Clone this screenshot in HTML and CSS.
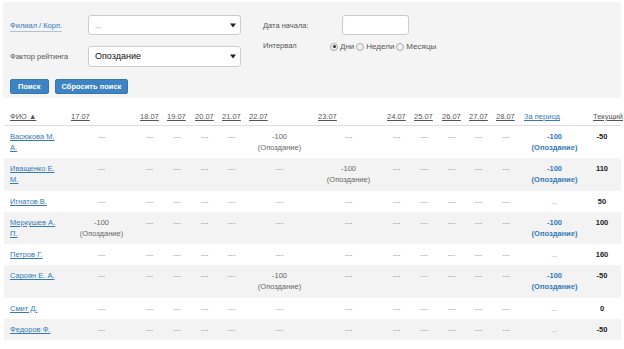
FILE: index.html
```html
<!DOCTYPE html>
<html lang="ru">
<head>
<meta charset="utf-8">
<title>Рейтинг</title>
<link rel="stylesheet" href="styles.css">
</head>
<body>
<div class="page">
  <div class="filters">
    <div class="filter-cols">
      <div class="col-left">
        <div class="frow">
          <span class="flabel"><a class="flink">Филиал / Корп.</a></span>
          <div class="select"><span class="ph">...</span><svg class="caret" width="6" height="5" viewBox="0 0 6 5"><path d="M0 0.5 H6 L3 4.5 Z" fill="#222"/></svg></div>
        </div>
        <div class="frow">
          <span class="flabel">Фактор рейтинга</span>
          <div class="select tall"><span class="val">Опоздание</span><svg class="caret" width="6" height="5" viewBox="0 0 6 5"><path d="M0 0.5 H6 L3 4.5 Z" fill="#222"/></svg></div>
        </div>
      </div>
      <div class="col-right">
        <div class="frow">
          <span class="rlabel">Дата начала:</span>
          <div class="dateinput"></div>
        </div>
        <div class="irow">
          <span class="ilabel">Интервал</span>
          <div class="radios">
            <span class="radio checked"></span><span class="rtext">Дни</span>
            <span class="radio"></span><span class="rtext">Недели</span>
            <span class="radio"></span><span class="rtext">Месяцы</span>
          </div>
        </div>
      </div>
    </div>
    <div class="buttons">
      <button class="btn">Поиск</button>
      <button class="btn">Сбросить поиск</button>
    </div>
  </div>

  <table class="grid">
    <colgroup>
      <col class="c-name"><col class="c-wide"><col class="c-day"><col class="c-day2"><col class="c-day"><col class="c-day"><col class="c-wide"><col class="c-wide"><col class="c-day"><col class="c-day2"><col class="c-day"><col class="c-day"><col class="c-day2"><col class="c-wide"><col class="c-cur">
    </colgroup>
    <thead>
      <tr>
        <th class="first"><a class="hlink">ФИО ▲</a></th>
        <th><a class="hlink">17.07</a></th>
        <th><a class="hlink">18.07</a></th>
        <th><a class="hlink">19.07</a></th>
        <th><a class="hlink">20.07</a></th>
        <th><a class="hlink">21.07</a></th>
        <th><a class="hlink">22.07</a></th>
        <th><a class="hlink">23.07</a></th>
        <th><a class="hlink">24.07</a></th>
        <th><a class="hlink">25.07</a></th>
        <th><a class="hlink">26.07</a></th>
        <th><a class="hlink">27.07</a></th>
        <th><a class="hlink">28.07</a></th>
        <th><a class="hlink blue">За период</a></th>
        <th><a class="hlink">Текущий</a></th>
      </tr>
    </thead>
    <tbody>
      <tr>
        <td class="name"><a>Васюкова М. А.</a></td>
        <td class="d">---</td><td class="d">---</td><td class="d">---</td><td class="d">---</td><td class="d">---</td>
        <td class="ev">-100<br>(Опоздание)</td>
        <td class="d">---</td><td class="d">---</td><td class="d">---</td><td class="d">---</td><td class="d">---</td><td class="d">---</td>
        <td class="sum">-100<br>(Опоздание)</td>
        <td class="cur">-50</td>
      </tr>
      <tr class="alt">
        <td class="name"><a>Иващенко Е. М.</a></td>
        <td class="d">---</td><td class="d">---</td><td class="d">---</td><td class="d">---</td><td class="d">---</td><td class="d">---</td>
        <td class="ev">-100<br>(Опоздание)</td>
        <td class="d">---</td><td class="d">---</td><td class="d">---</td><td class="d">---</td><td class="d">---</td>
        <td class="sum">-100<br>(Опоздание)</td>
        <td class="cur">110</td>
      </tr>
      <tr>
        <td class="name"><a>Игнатов В.</a></td>
        <td class="d">---</td><td class="d">---</td><td class="d">---</td><td class="d">---</td><td class="d">---</td><td class="d">---</td>
        <td class="d">---</td><td class="d">---</td><td class="d">---</td><td class="d">---</td><td class="d">---</td><td class="d">---</td>
        <td class="sum empty">...</td>
        <td class="cur">50</td>
      </tr>
      <tr class="alt">
        <td class="name"><a>Меркушев А. П.</a></td>
        <td class="ev">-100<br>(Опоздание)</td>
        <td class="d">---</td><td class="d">---</td><td class="d">---</td><td class="d">---</td><td class="d">---</td>
        <td class="d">---</td><td class="d">---</td><td class="d">---</td><td class="d">---</td><td class="d">---</td><td class="d">---</td>
        <td class="sum">-100<br>(Опоздание)</td>
        <td class="cur">100</td>
      </tr>
      <tr>
        <td class="name"><a>Петров Г.</a></td>
        <td class="d">---</td><td class="d">---</td><td class="d">---</td><td class="d">---</td><td class="d">---</td><td class="d">---</td>
        <td class="d">---</td><td class="d">---</td><td class="d">---</td><td class="d">---</td><td class="d">---</td><td class="d">---</td>
        <td class="sum empty">...</td>
        <td class="cur">160</td>
      </tr>
      <tr class="alt">
        <td class="name"><a>Сароян Е. А.</a></td>
        <td class="d">---</td><td class="d">---</td><td class="d">---</td><td class="d">---</td><td class="d">---</td>
        <td class="ev">-100<br>(Опоздание)</td>
        <td class="d">---</td><td class="d">---</td><td class="d">---</td><td class="d">---</td><td class="d">---</td><td class="d">---</td>
        <td class="sum">-100<br>(Опоздание)</td>
        <td class="cur">-50</td>
      </tr>
      <tr>
        <td class="name"><a>Смит Д.</a></td>
        <td class="d">---</td><td class="d">---</td><td class="d">---</td><td class="d">---</td><td class="d">---</td><td class="d">---</td>
        <td class="d">---</td><td class="d">---</td><td class="d">---</td><td class="d">---</td><td class="d">---</td><td class="d">---</td>
        <td class="sum empty">...</td>
        <td class="cur">0</td>
      </tr>
      <tr class="alt">
        <td class="name"><a>Федоров Ф.</a></td>
        <td class="d">---</td><td class="d">---</td><td class="d">---</td><td class="d">---</td><td class="d">---</td><td class="d">---</td>
        <td class="d">---</td><td class="d">---</td><td class="d">---</td><td class="d">---</td><td class="d">---</td><td class="d">---</td>
        <td class="sum empty">...</td>
        <td class="cur">-50</td>
      </tr>
    </tbody>
  </table>
</div>
</body>
</html>
```

FILE: styles.css
```css
html, body {
  margin: 0;
  padding: 0;
  background: #fff;
}
body {
  font-family: "Liberation Sans", Arial, sans-serif;
  font-size: 7.5px;
  line-height: 11px;
  color: #333;
}
.page {
  margin: 2px 3px 0 3px;
}
.filters {
  background: #f4f4f4;
  padding: 13px 7px 4px 7px;
}
.filter-cols {
  display: flex;
  gap: 22px;
}
.col-left {
  display: flex;
  flex-direction: column;
  gap: 11px;
}
.frow {
  display: flex;
  align-items: center;
}
.flabel {
  width: 78px;
  color: #555;
  font-size: 7.5px;
}
.flink {
  color: #337ab7;
  border-bottom: 1px solid #a9c4de;
  padding-bottom: 1px;
}
.select {
  width: 153px;
  height: 20px;
  box-sizing: border-box;
  border: 1px solid #ccc;
  border-radius: 3px;
  background: #fff;
  display: flex;
  align-items: center;
  justify-content: space-between;
  padding: 0 4px 0 6px;
}
.select.tall {
  height: 21px;
}
.ph {
  color: #d9534f;
  font-size: 7.5px;
}
.val {
  color: #111;
  font-size: 9px;
}
.caret {
  display: block;
}
.col-right {
  display: flex;
  flex-direction: column;
}
.rlabel {
  width: 79px;
  color: #555;
}
.dateinput {
  width: 67px;
  height: 20px;
  box-sizing: border-box;
  border: 1px solid #ccc;
  border-radius: 3px;
  background: #fff;
}
.irow {
  display: flex;
  align-items: center;
  margin-top: 4px;
}
.ilabel {
  width: 67px;
  color: #555;
}
.radios {
  display: flex;
  align-items: center;
  margin-top: 2px;
  color: #555;
  font-size: 8px;
}
.radio {
  width: 8px;
  height: 8px;
  box-sizing: border-box;
  border-radius: 50%;
  border: 1px solid #aaa;
  background: #f0f0f0;
  margin-right: 2px;
  position: relative;
}
.radio.checked::after {
  content: "";
  position: absolute;
  left: 1.5px;
  top: 1.5px;
  width: 3px;
  height: 3px;
  border-radius: 50%;
  background: #333;
}
.rtext {
  margin-right: 2px;
}
.buttons {
  display: flex;
  gap: 6px;
  margin-top: 12px;
}
.btn {
  font-family: "Liberation Sans", Arial, sans-serif;
  font-size: 7.5px;
  line-height: 11px;
  font-weight: bold;
  color: #fff;
  background: #3f84c2;
  border: 1px solid #3677b2;
  border-radius: 2px;
  padding: 1px 7px;
  margin: 0;
}
.btn + .btn {
  padding: 1px 6px;
}
.grid {
  border-collapse: collapse;
  table-layout: fixed;
  width: 617px;
  margin: 7px 0 0 1px;
}
.c-name { width: 63px; }
.c-wide { width: 69px; }
.c-day { width: 27px; }
.c-day2 { width: 28px; }
.c-cur { width: 32px; }
.grid th {
  font-weight: normal;
  text-align: left;
  vertical-align: bottom;
  padding: 6px 2px 3px 4px;
  border-bottom: 1px solid #ddd;
  white-space: nowrap;
}
.grid th.first {
  padding-left: 6px;
}
.hlink {
  color: #555;
  text-decoration: underline;
}
.hlink.blue {
  color: #337ab7;
}
.grid td {
  padding: 5px 3px 5.3px 3px;
  text-align: center;
  vertical-align: top;
}
.grid tr.alt td {
  background: #f3f3f3;
}
.grid td.name {
  text-align: left;
  padding-left: 6px;
  padding-right: 6px;
}
.grid td.name a {
  color: #337ab7;
  text-decoration: underline;
}
.grid td.d {
  color: #7b9cc4;
}
.grid td.ev {
  color: #666;
}
.grid td.sum {
  color: #337ab7;
  font-weight: bold;
}
.grid td.sum.empty {
  color: #7b9cc4;
  font-weight: normal;
}
.grid td.cur {
  font-weight: bold;
  color: #222;
  text-align: center;
  padding-right: 9px;
}
```
